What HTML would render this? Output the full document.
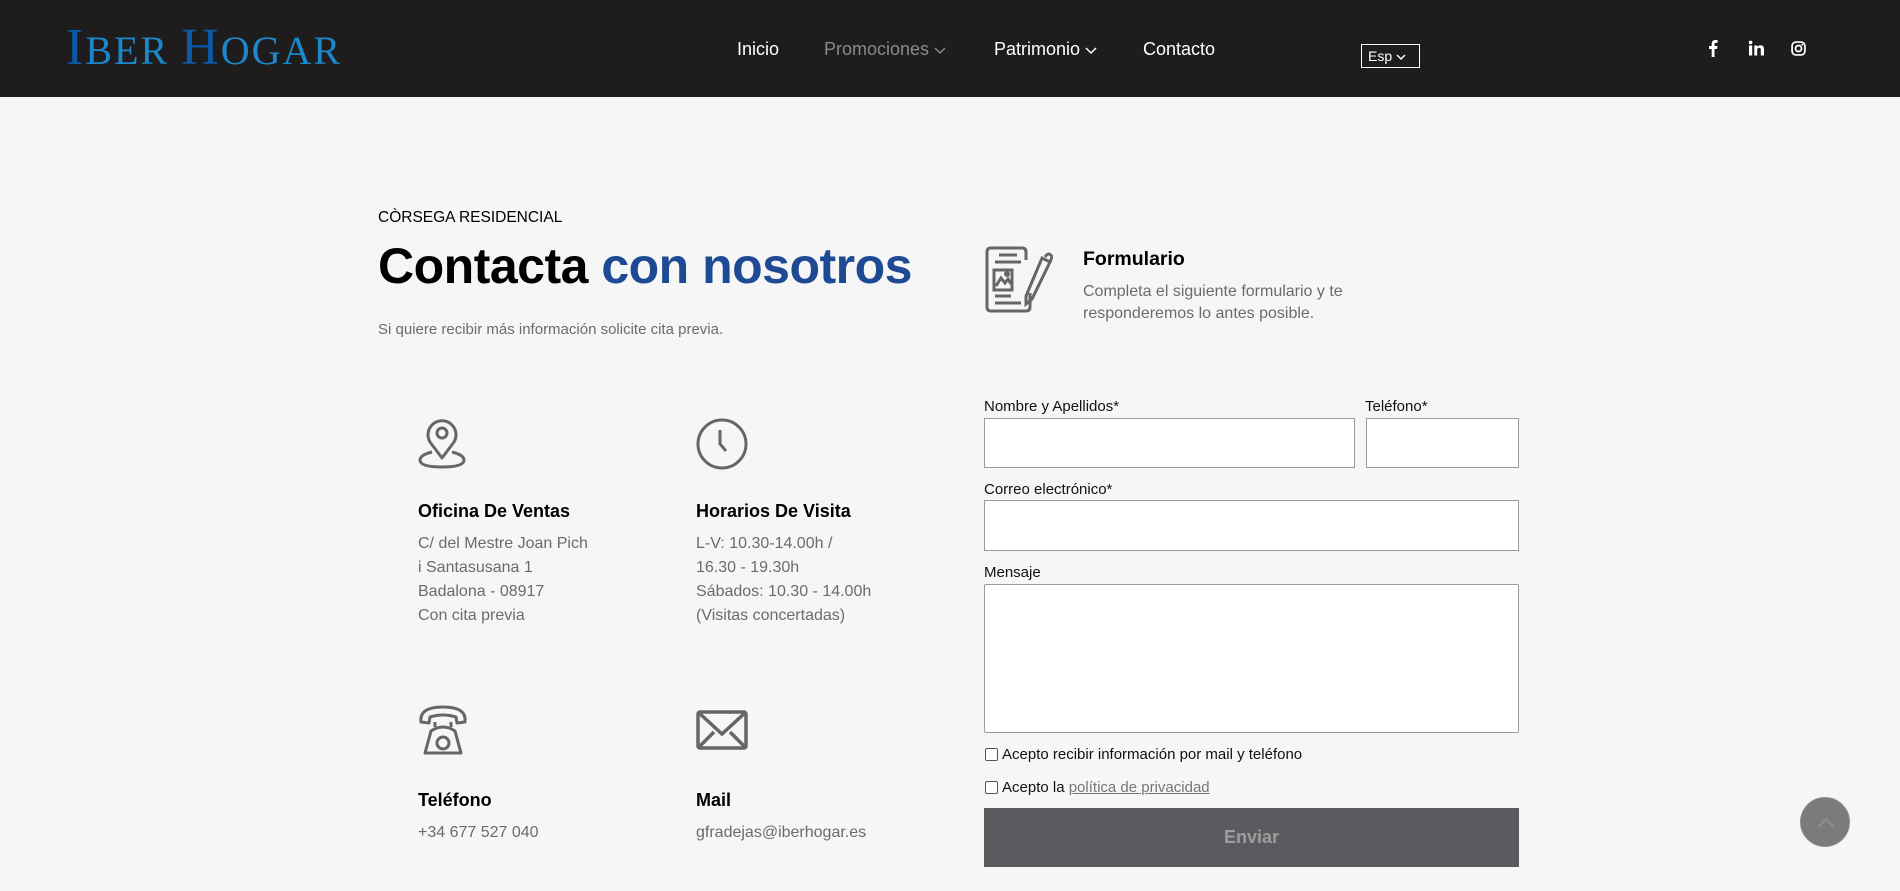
<!DOCTYPE html>
<html><head><meta charset="utf-8"><style>
*{margin:0;padding:0;box-sizing:border-box}
body{width:1900px;height:891px;background:#f6f6f6;font-family:"Liberation Sans",sans-serif;position:relative;overflow:hidden;color:#000}
.a{position:absolute;white-space:nowrap}
header{position:absolute;left:0;top:0;width:1900px;height:97px;background:#1e1c1c}
.nav{font-size:18px;color:#fff;top:39px}
.g{color:#6b6b6b;font-size:16px;line-height:24px}
.h{font-weight:bold;font-size:18px}
.lbl{font-size:15px;color:#111}
.in{position:absolute;background:#fff;border:1px solid #9a9a9a}
.cb{position:absolute;width:13px;height:13px;border:1px solid #555;background:#fff;border-radius:2px}
</style></head><body>
<header>
<div class="a" style="left:66px;top:20px;font-family:'Liberation Serif',serif;font-size:52px;letter-spacing:2px;line-height:56px"><span style="color:#0c59a8">I</span><span style="color:#1c88cc;font-size:40px">BER </span><span style="color:#0c59a8">H</span><span style="color:#1c88cc;font-size:40px">OGAR</span></div>
<div class="a nav" style="left:737px">Inicio</div>
<div class="a nav" style="left:824px;color:#8a8a8a">Promociones <svg width="12" height="8" viewBox="0 0 12 8"><path d="M1 1l5 5 5-5" stroke="#8a8a8a" fill="none" stroke-width="1.5"/></svg></div>
<div class="a nav" style="left:994px">Patrimonio <svg width="12" height="8" viewBox="0 0 12 8"><path d="M1 1l5 5 5-5" stroke="#fff" fill="none" stroke-width="1.5"/></svg></div>
<div class="a nav" style="left:1143px">Contacto</div>
<div class="a" style="left:1361px;top:44px;width:59px;height:24px;border:1.5px solid #fff;color:#fff;font-size:14px;padding:3px 0 0 6px">Esp <svg width="10" height="7" viewBox="0 0 10 7"><path d="M1 1l4 4 4-4" stroke="#fff" fill="none" stroke-width="1.5"/></svg></div>
<svg class="a" style="left:1708px;top:39px" width="10" height="18" viewBox="0 0 10 18"><path d="M6.5 18V10h2.6l.4-3H6.5V5.2c0-.9.3-1.5 1.5-1.5H9.6V1.1C9.3 1 8.4 1 7.4 1 5.2 1 3.7 2.3 3.7 4.8V7H1v3h2.7v8z" fill="#fff"/></svg>
<svg class="a" style="left:1748px;top:40px" width="16" height="16" viewBox="0 0 16 16"><rect x="1" y="5.5" width="3.2" height="10" fill="#fff"/><circle cx="2.6" cy="2.4" r="1.8" fill="#fff"/><path d="M6.3 5.5h3v1.4c.5-.9 1.6-1.7 3.2-1.7 3 0 3.5 2 3.5 4.5v5.8h-3.2v-5c0-1.2 0-2.7-1.7-2.7s-1.9 1.3-1.9 2.6v5.1H6.3z" fill="#fff"/></svg>
<svg class="a" style="left:1791px;top:41px" width="15" height="15" viewBox="0 0 14 14"><rect x="1" y="1" width="12" height="12" rx="3.5" stroke="#fff" stroke-width="1.6" fill="none"/><circle cx="7" cy="7" r="2.8" stroke="#fff" stroke-width="1.6" fill="none"/><circle cx="10.5" cy="3.5" r="0.9" fill="#fff"/></svg>
</header>

<div class="a" style="left:378px;top:209px;font-size:15.5px">CÒRSEGA RESIDENCIAL</div>
<div class="a" style="left:378px;top:237px;font-size:50px;font-weight:bold;letter-spacing:-0.5px">Contacta <span style="color:#1e4a94">con nosotros</span></div>
<div class="a" style="left:378px;top:321px;font-size:15px;color:#6b6b6b">Si quiere recibir más información solicite cita previa.</div>

<svg class="a" style="left:985px;top:246px" width="68" height="67" viewBox="0 0 68 67" fill="none" stroke="#666" stroke-width="3"><path d="M37 2H6Q2 2 2 6v55q0 4 4 4h35q4 0 4-4V47"/><path d="M37 2q4 0 4 4v8"/><path d="M14 9h18M10 16h26M10 50h16M10 57h26"/><rect x="9" y="24" width="18" height="20"/><path d="M11 40l5-8 4 5 3-4 3 5"/><circle cx="22" cy="28" r="1.5"/><path d="M57 12l8 4-18 37-6 5 0-8z"/><path d="M60 11q4-6 7 0l-2 5"/></svg>
<div class="a" style="left:1083px;top:248px;font-size:19.5px;font-weight:bold">Formulario</div>
<div class="a g" style="left:1083px;top:281px;line-height:22px">Completa el siguiente formulario y te<br>responderemos lo antes posible.</div>

<svg class="a" style="left:418px;top:418px" width="48" height="52" viewBox="0 0 48 52" fill="none" stroke="#666" stroke-width="3"><path d="M24 40L12 24A14 14 0 1 1 36 24z" stroke-linejoin="round"/><circle cx="24" cy="15" r="5"/><path d="M14 34Q2 37 2 42q0 7 22 7t22-7q0-5-12-8"/></svg>
<svg class="a" style="left:696px;top:418px" width="52" height="52" viewBox="0 0 52 52" fill="none" stroke="#666" stroke-width="3"><circle cx="26" cy="26" r="24"/><path d="M24 12v14l6 7"/></svg>
<div class="a h" style="left:418px;top:501px">Oficina De Ventas</div>
<div class="a g" style="left:418px;top:532px">C/ del Mestre Joan Pich<br>i Santasusana 1<br>Badalona - 08917<br>Con cita previa</div>
<div class="a h" style="left:696px;top:501px">Horarios De Visita</div>
<div class="a g" style="left:696px;top:532px">L-V: 10.30-14.00h /<br>16.30 - 19.30h<br>Sábados: 10.30 - 14.00h<br>(Visitas concertadas)</div>

<svg class="a" style="left:417px;top:705px" width="52" height="52" viewBox="0 0 52 52" fill="none" stroke="#666" stroke-width="3"><path d="M4 17Q2 2 26 2t22 15l-8 1-1-6q-13-4-26 0l-1 6z" stroke-linejoin="round"/><path d="M18 17v5M34 17v5M14 26q12-8 24 0l6 22H8z" stroke-linejoin="round"/><circle cx="26" cy="38" r="6"/></svg>
<svg class="a" style="left:696px;top:710px" width="52" height="40" viewBox="0 0 52 40" fill="none" stroke="#666" stroke-width="3.5"><rect x="2" y="2" width="48" height="36" rx="2"/><path d="M2 2l24 22 24-22M2 38l16-16M50 38L34 22"/></svg>
<div class="a h" style="left:418px;top:790px">Teléfono</div>
<div class="a g" style="left:418px;top:821px">+34 677 527 040</div>
<div class="a h" style="left:696px;top:790px">Mail</div>
<div class="a g" style="left:696px;top:821px">gfradejas@iberhogar.es</div>

<div class="a lbl" style="left:984px;top:398px">Nombre y Apellidos*</div>
<div class="a lbl" style="left:1365px;top:398px">Teléfono*</div>
<div class="in" style="left:984px;top:418px;width:371px;height:50px"></div>
<div class="in" style="left:1366px;top:418px;width:153px;height:50px"></div>
<div class="a lbl" style="left:984px;top:481px">Correo electrónico*</div>
<div class="in" style="left:984px;top:500px;width:535px;height:51px"></div>
<div class="a lbl" style="left:984px;top:564px">Mensaje</div>
<div class="in" style="left:984px;top:584px;width:535px;height:149px;border-radius:2px"></div>
<div class="cb" style="left:985px;top:748px"></div>
<div class="a lbl" style="left:1002px;top:746px">Acepto recibir información por mail y teléfono</div>
<div class="cb" style="left:985px;top:781px"></div>
<div class="a lbl" style="left:1002px;top:779px">Acepto la <span style="color:#777;text-decoration:underline">política de privacidad</span></div>
<div class="a" style="left:984px;top:808px;width:535px;height:59px;background:#5a5b5e;color:#9d9d9d;font-size:18px;font-weight:bold;text-align:center;line-height:59px">Enviar</div>
<div class="a" style="left:1800px;top:797px;width:50px;height:50px;border-radius:50%;background:#7b7b7b;border:1px solid #8e8e8e"><svg width="50" height="50" viewBox="0 0 50 50"><path d="M17 29l8-8 8 8" stroke="#999" fill="none" stroke-width="1.3"/></svg></div>
</body></html>
